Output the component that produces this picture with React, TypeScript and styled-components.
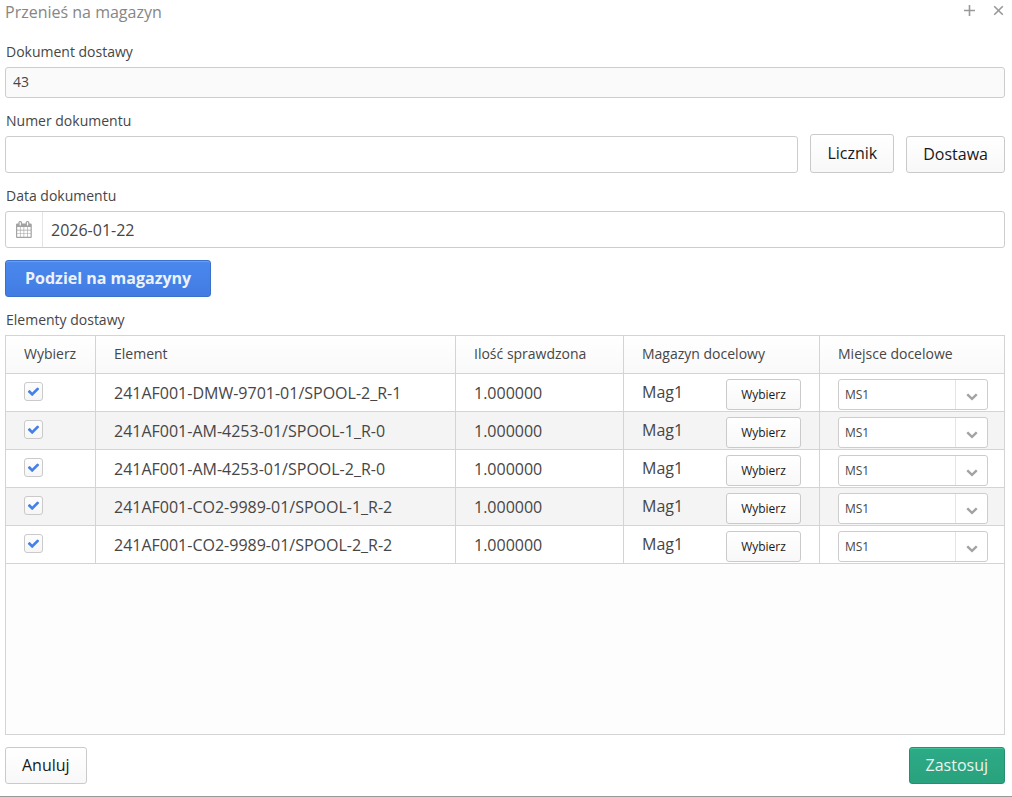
import React, { useId, useState } from "react";
import styled, { createGlobalStyle, css } from "styled-components";

const GlobalStyle = createGlobalStyle`
  *, *::before, *::after { box-sizing: border-box; }
  body {
    margin: 0;
    background: #fff;
    color: #464646;
    font-family: "Open Sans", "Noto Sans", sans-serif;
    font-size: 16px;
    line-height: 24px;
  }
  button, input, select { font: inherit; color: inherit; margin: 0; }
`;

const Window = styled.main`
  display: flex;
  flex-direction: column;
  gap: 12px;
  min-height: 100vh;
  padding: 0 7px 12px 5px;
  border-bottom: 1px solid #999;
`;

const Header = styled.header`
  display: flex;
  justify-content: space-between;
  align-items: flex-start;
  padding-bottom: 5px;
`;

const Title = styled.h1`
  margin: 0;
  font-size: 16px;
  font-weight: 400;
  line-height: 24px;
  color: #868686;
`;

const WindowTools = styled.div`
  display: flex;
  gap: 4px;
  height: 21px;
  margin-right: -6px;
`;

const ToolButton = styled.button`
  display: grid;
  place-items: center;
  width: 25px;
  padding: 0;
  border: 0;
  background: none;
  color: #999;
`;

const Field = styled.div`
  display: flex;
  flex-direction: column;
  gap: 4px;
`;

const captionStyle = css`
  padding-left: 1px;
  font-size: 14px;
  line-height: 22px;
`;

const Label = styled.label`
  ${captionStyle}
`;

const TextInput = styled.input<{ $small?: boolean }>`
  width: 100%;
  min-width: 0;
  height: ${(p) => (p.$small ? 31 : 37)}px;
  padding: 0 7px 2px;
  border: 1px solid #cdcdcd;
  border-radius: 3px;
  background: ${(p) => (p.readOnly ? "#fafafa" : "#fff")};
  font-size: ${(p) => (p.$small ? 14 : 16)}px;
`;

const NumberRow = styled.div`
  display: flex;
  align-items: flex-end;
  gap: 12px;
`;

const GrowField = styled(Field)`
  flex: 1;
  min-width: 0;
`;

const DateBox = styled.div`
  display: flex;
  height: 37px;
  border: 1px solid #cdcdcd;
  border-radius: 3px;
`;

const DateToggle = styled.button`
  display: grid;
  place-items: center;
  width: 37px;
  padding: 0 0 1px;
  border: 0;
  border-right: 1px solid #e4e4e4;
  background: none;
  color: #a3a3a3;
`;

const DateInput = styled.input`
  flex: 1;
  min-width: 0;
  padding: 0 8px;
  border: 0;
  background: none;
`;

type Tone = "plain" | "primary" | "friendly";

const tones = {
  plain: css`
    border-color: #cacaca;
    background: linear-gradient(#fff, #f8f8f8);
    color: #191919;
  `,
  primary: css`
    padding: 0 19px 2px;
    border-color: #3b70cb;
    background: linear-gradient(#4a88ee, #427ce3);
    box-shadow: inset 0 1px 0 #6b9ff5;
    color: #ecf2f8;
    font-weight: 700;
  `,
  friendly: css`
    border-color: #278f6d;
    background: linear-gradient(#2cab86, #29a27d);
    box-shadow: inset 0 1px 0 #45c29b;
    color: #eaf4f1;
  `,
};

const Button = styled.button<{ $tone?: Tone; $tall?: boolean }>`
  height: ${(p) => (p.$tall ? 39 : 37)}px;
  padding: 0 16px 2px;
  border: 1px solid;
  border-radius: 3px;
  line-height: 24px;
  white-space: nowrap;
  ${(p) => tones[p.$tone ?? "plain"]}
`;

const Actions = styled.div`
  display: flex;
  justify-content: space-between;
`;

const GridSection = styled.section`
  flex: 1;
  display: flex;
  flex-direction: column;
  gap: 4px;
`;

const Caption = styled.div`
  ${captionStyle}
`;

const GridPanel = styled.div`
  flex: 1;
  border: 1px solid #d4d4d4;
  background: #fdfdfd;
`;

const Table = styled.table`
  width: 100%;
  table-layout: fixed;
  border-collapse: separate;
  border-spacing: 0;
`;

const Column = styled.col<{ $width?: number }>`
  ${(p) => p.$width && `width: ${p.$width}px;`}
`;

const HeadCell = styled.th`
  height: 38px;
  padding: 0 18px 2px;
  border-bottom: 1px solid #d4d4d4;
  background: linear-gradient(#fff, #f9f9f9);
  font-size: 14px;
  font-weight: 400;
  line-height: 22px;
  text-align: left;
  white-space: nowrap;
  &:not(:last-child) { border-right: 1px solid #d4d4d4; }
`;

const Row = styled.tr`
  background: #fff;
  &:nth-child(even) { background: #f4f4f4; }
`;

const Cell = styled.td`
  height: 38px;
  padding: 0 16px 0 18px;
  border-bottom: 1px solid #d4d4d4;
  white-space: nowrap;
  &:not(:last-child) { padding-right: 18px; border-right: 1px solid #d4d4d4; }
`;

const Check = styled.label`
  display: grid;
  width: 19px;
  height: 19px;
  margin-bottom: 2px;
  & > * { grid-area: 1 / 1; place-self: center; }
  svg { color: #4480ea; pointer-events: none; visibility: hidden; }
  input:checked + svg { visibility: visible; }
`;

const CheckInput = styled.input`
  appearance: none;
  width: 19px;
  height: 19px;
  border: 1px solid #cacaca;
  border-radius: 3px;
  background: linear-gradient(#fdfdfd, #f6f6f6);
`;

const Store = styled.div`
  display: flex;
  justify-content: space-between;
  height: 37px;
  padding-top: 5px;
`;

const StoreName = styled.span`
  line-height: 26px;
`;

const SmallButton = styled(Button)`
  width: 75px;
  height: 31px;
  padding: 0;
  font-size: 12px;
`;

const SelectBox = styled.div`
  display: flex;
  position: relative;
  height: 37px;
  padding-top: 5px;
`;

const Select = styled.select`
  appearance: none;
  width: 150px;
  height: 31px;
  padding: 0 36px 0 6px;
  border: 1px solid #cdcdcd;
  border-radius: 3px;
  background: #fff;
  font-size: 12px;
`;

const Arrow = styled.span`
  position: absolute;
  top: 6px;
  left: 117px;
  display: grid;
  place-items: center;
  width: 32px;
  height: 29px;
  padding-top: 2px;
  border-left: 1px solid #e4e4e4;
  color: #a3a3a3;
  pointer-events: none;
`;

function Glyph({ size, width = 1792, path }: { size: number; width?: number; path: string }) {
  return (
    <svg width={(size * width) / 1792} height={size} viewBox={`0 0 ${width} 1792`} fill="currentColor" aria-hidden="true">
      <path d={path} />
    </svg>
  );
}

const CHECK =
  "M1671 566q0 40-28 68l-724 724-136 136q-28 28-68 28t-68-28l-136-136-362-362q-28-28-28-68t28-68l136-136q28-28 68-28t68 28l294 295 656-657q28-28 68-28t68 28l136 136q28 28 28 68z";
const CHEVRON =
  "M1683 808l-742 741q-19 19-45 19t-45-19l-742-741q-19-19-19-45.5t19-45.5l166-165q19-19 45-19t45 19l531 531 531-531q19-19 45-19t45 19l166 165q19 19 19 45.5t-19 45.5z";
const CALENDAR =
  "M128 1664h288v-288h-288v288zm352 0h320v-288h-320v288zm-352-352h288v-320h-288v320zm352 0h320v-320h-320v320zm-352-384h288v-288h-288v288zm736 736h320v-288h-320v288zm-384-736h320v-288h-320v288zm768 736h288v-288h-288v288zm-384-352h320v-320h-320v320zm-352-864v-288q0-13-9.5-22.5t-22.5-9.5h-64q-13 0-22.5 9.5t-9.5 22.5v288q0 13 9.5 22.5t22.5 9.5h64q13 0 22.5-9.5t9.5-22.5zm736 864h288v-320h-288v320zm-384-384h320v-288h-320v288zm384 0h288v-288h-288v288zm32-480v-288q0-13-9.5-22.5t-22.5-9.5h-64q-13 0-22.5 9.5t-9.5 22.5v288q0 13 9.5 22.5t22.5 9.5h64q13 0 22.5-9.5t9.5-22.5zm384-64v1280q0 52-38 90t-90 38h-1408q-52 0-90-38t-38-90v-1280q0-52 38-90t90-38h128v-96q0-66 47-113t113-47h64q66 0 113 47t47 113v96h384v-96q0-66 47-113t113-47h64q66 0 113 47t47 113v96h128q52 0 90 38t38 90z";

const ELEMENTS = [
  "241AF001-DMW-9701-01/SPOOL-2_R-1",
  "241AF001-AM-4253-01/SPOOL-1_R-0",
  "241AF001-AM-4253-01/SPOOL-2_R-0",
  "241AF001-CO2-9989-01/SPOOL-1_R-2",
  "241AF001-CO2-9989-01/SPOOL-2_R-2",
];

function ElementRow({ name }: { name: string }) {
  const [checked, setChecked] = useState(true);
  return (
    <Row>
      <Cell>
        <Check>
          <CheckInput
            type="checkbox"
            aria-label={name}
            checked={checked}
            onChange={(e) => setChecked(e.target.checked)}
          />
          <Glyph size={13} path={CHECK} />
        </Check>
      </Cell>
      <Cell>{name}</Cell>
      <Cell>1.000000</Cell>
      <Cell>
        <Store>
          <StoreName>Mag1</StoreName>
          <SmallButton type="button">Wybierz</SmallButton>
        </Store>
      </Cell>
      <Cell>
        <SelectBox>
          <Select aria-label="Miejsce docelowe" defaultValue="MS1">
            <option>MS1</option>
          </Select>
          <Arrow>
            <Glyph size={12} path={CHEVRON} />
          </Arrow>
        </SelectBox>
      </Cell>
    </Row>
  );
}

export default function App() {
  const id = useId();
  return (
    <>
      <GlobalStyle />
      <Window>
        <Header>
          <Title>Przenieś na magazyn</Title>
          <WindowTools>
            <ToolButton type="button" aria-label="Maksymalizuj">
              <svg width="11" height="11" viewBox="0 0 11 11" stroke="currentColor" strokeWidth="1.6">
                <path d="M5.5 0v11M0 5.5h11" />
              </svg>
            </ToolButton>
            <ToolButton type="button" aria-label="Zamknij">
              <svg width="11" height="11" viewBox="0 0 11 11" stroke="currentColor" strokeWidth="1.6">
                <path d="M1.2 1.2l8.6 8.6M9.8 1.2l-8.6 8.6" />
              </svg>
            </ToolButton>
          </WindowTools>
        </Header>

        <Field>
          <Label htmlFor={`${id}-doc`}>Dokument dostawy</Label>
          <TextInput id={`${id}-doc`} $small readOnly value="43" />
        </Field>

        <NumberRow>
          <GrowField>
            <Label htmlFor={`${id}-num`}>Numer dokumentu</Label>
            <TextInput id={`${id}-num`} />
          </GrowField>
          <Button type="button" $tall>Licznik</Button>
          <Button type="button">Dostawa</Button>
        </NumberRow>

        <Field>
          <Label htmlFor={`${id}-date`}>Data dokumentu</Label>
          <DateBox>
            <DateToggle type="button" aria-label="Kalendarz">
              <Glyph size={17} width={1664} path={CALENDAR} />
            </DateToggle>
            <DateInput id={`${id}-date`} defaultValue="2026-01-22" />
          </DateBox>
        </Field>

        <Actions>
          <Button type="button" $tone="primary">Podziel na magazyny</Button>
        </Actions>

        <GridSection aria-labelledby={`${id}-grid`}>
          <Caption id={`${id}-grid`}>Elementy dostawy</Caption>
          <GridPanel>
            <Table>
              <colgroup>
                <Column $width={90} />
                <Column $width={360} />
                <Column $width={168} />
                <Column $width={196} />
                <Column />
              </colgroup>
              <thead>
                <tr>
                  <HeadCell>Wybierz</HeadCell>
                  <HeadCell>Element</HeadCell>
                  <HeadCell>Ilość sprawdzona</HeadCell>
                  <HeadCell>Magazyn docelowy</HeadCell>
                  <HeadCell>Miejsce docelowe</HeadCell>
                </tr>
              </thead>
              <tbody>
                {ELEMENTS.map((name) => (
                  <ElementRow key={name} name={name} />
                ))}
              </tbody>
            </Table>
          </GridPanel>
        </GridSection>

        <Actions>
          <Button type="button">Anuluj</Button>
          <Button type="button" $tone="friendly">Zastosuj</Button>
        </Actions>
      </Window>
    </>
  );
}
